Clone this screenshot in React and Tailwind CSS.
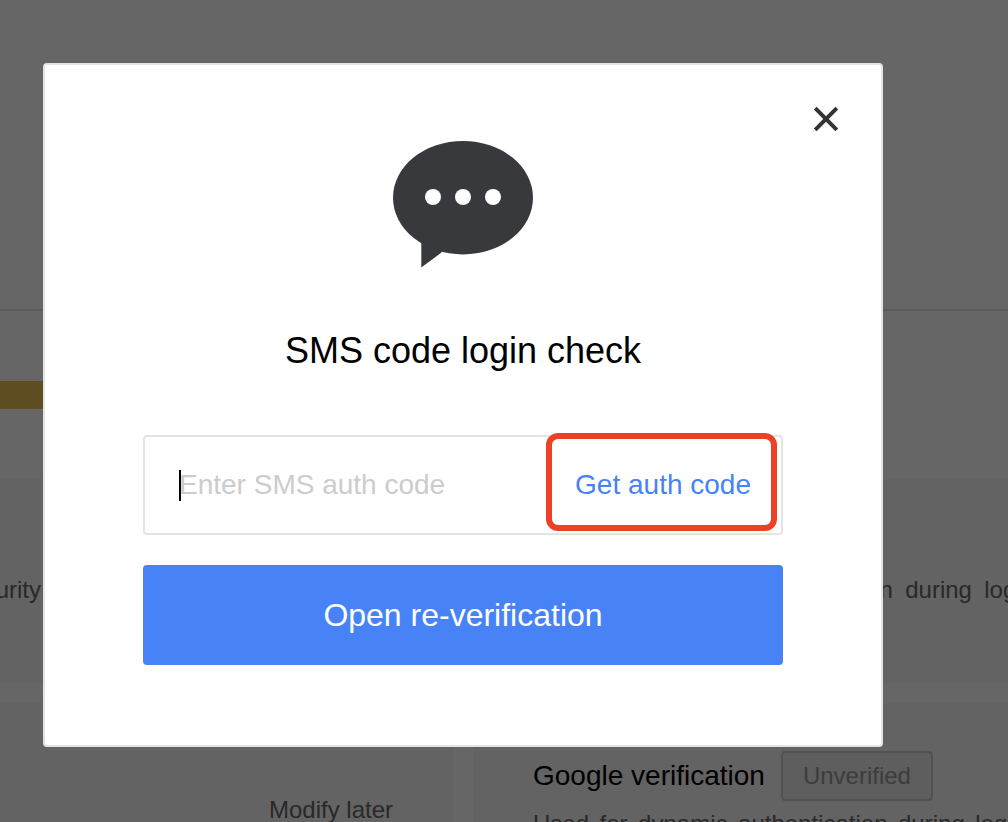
import React from "react";

function SecurityPage() {
  return (
    <main className="min-h-screen w-full bg-white text-[24px] leading-[28px] text-[#666]">
      <header className="h-[311px] border-b-2 border-[#e6e6e6]" />
      <section className="py-[70px]">
        <div className="h-[28px] w-1/3 bg-[#ebc150]" />
      </section>
      <section className="-ml-[147px] grid grid-cols-[600px_600px] gap-5">
        <article className="h-[204px] bg-[#f8f8f8] px-[60px] pt-[97px]">
          <p className="w-[128px] [text-align-last:justify]">For security</p>
        </article>
        <article className="h-[204px] bg-[#f8f8f8] px-[60px] pt-[97px]">
          <p className="w-[502px] whitespace-nowrap [text-align-last:justify]">
            Used for dynamic authentication during login
          </p>
        </article>
        <article className="h-[204px] bg-[#f8f8f8] px-[60px] pt-[93px] text-right">
          <p>Modify later</p>
        </article>
        <article className="h-[204px] bg-[#f8f8f8] px-[60px] pt-[48px]">
          <div className="flex items-center gap-4">
            <h2 className="text-[28px] leading-[32px] text-black">Google verification</h2>
            <span className="flex h-[50px] items-center rounded-[4px] border-2 border-[#ccc] bg-[#eaeaea] px-5 text-[#999]">
              Unverified
            </span>
          </div>
          <p className="mt-[9px] w-[493px] whitespace-nowrap [text-align-last:justify]">
            Used for dynamic authentication during login
          </p>
        </article>
      </section>
    </main>
  );
}

function ChatBubble() {
  return (
    <svg className="h-[128px] w-[140px]" viewBox="0 0 140 128" aria-hidden="true">
      <ellipse cx="70" cy="56.7" rx="70" ry="56.7" fill="#38393d" />
      <path d="M28.3 98V126.6L48.5 111.5V100Z" fill="#38393d" />
      <circle cx="40" cy="56" r="8" fill="#fff" />
      <circle cx="70" cy="56" r="8" fill="#fff" />
      <circle cx="100" cy="56" r="8" fill="#fff" />
    </svg>
  );
}

function SmsDialog() {
  return (
    <form
      role="dialog"
      aria-labelledby="dialog-title"
      onSubmit={(e) => e.preventDefault()}
      className="relative flex w-[840px] max-w-full flex-col items-center rounded-[4px] border-2 border-[#e4e4e4] bg-white px-[98px] pt-[76px] pb-20"
    >
      <button type="button" aria-label="Close" className="absolute top-[38px] right-[39px] p-1">
        <svg className="size-[24px] overflow-visible" viewBox="0 0 24 24" aria-hidden="true">
          <path d="M1.2 1.2 22.8 22.8M22.8 1.2 1.2 22.8" stroke="#333" strokeWidth="4" fill="none" />
        </svg>
      </button>
      <ChatBubble />
      <h1 id="dialog-title" className="mt-[62px] text-[36px] leading-[40px] text-black">
        SMS code login check
      </h1>
      <div className="relative mt-[64px] flex h-[100px] w-full items-center rounded-[4px] border-2 border-[#e4e4e4] pr-[30px] pl-[34px] text-[28px] leading-[32px]">
        <span className="-mr-[2px] h-[31px] w-[2px] shrink-0 bg-black" />
        <input
          type="text"
          aria-label="SMS auth code"
          placeholder="Enter SMS auth code"
          className="min-w-0 flex-1 bg-transparent outline-none placeholder:text-[#ccc]"
        />
        <button type="button" className="shrink-0 text-[#4783f7]">
          Get auth code
        </button>
        <span className="pointer-events-none absolute -top-1 right-1 bottom-[2px] w-[231px] rounded-[12px] border-6 border-[#ee4026]" />
      </div>
      <button
        type="submit"
        className="mt-[30px] h-[100px] w-full rounded-[4px] bg-[#4783f7] text-[32px] leading-[36px] text-white"
      >
        Open re-verification
      </button>
    </form>
  );
}

export default function App() {
  return (
    <div className="relative h-screen overflow-hidden font-['Liberation_Sans',Arial,sans-serif]">
      <SecurityPage />
      <div className="absolute inset-0 flex items-start justify-center bg-black/60 pt-[63px] pr-[82px]">
        <SmsDialog />
      </div>
    </div>
  );
}
